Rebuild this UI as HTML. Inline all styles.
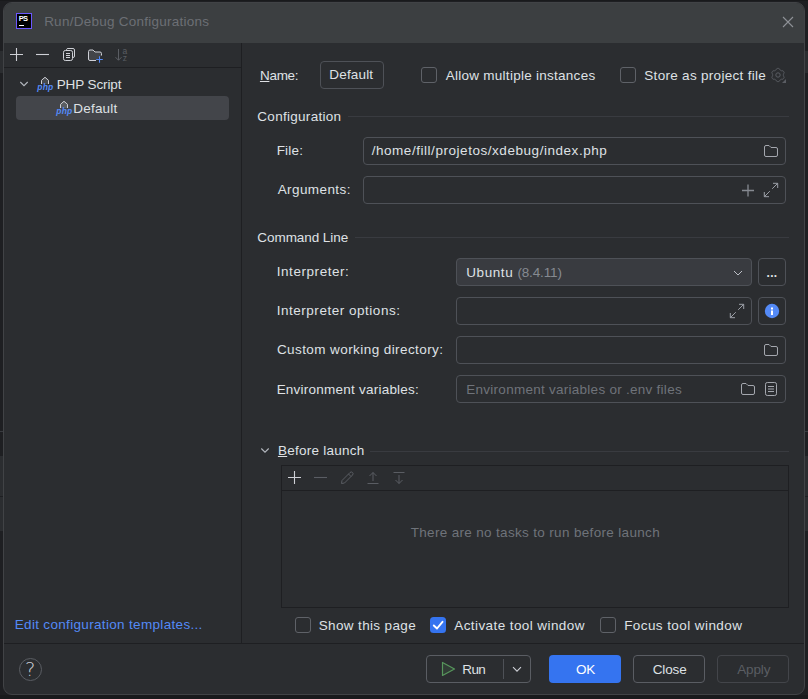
<!DOCTYPE html>
<html lang="en"><head><meta charset="utf-8"><title>Run/Debug Configurations</title>
<style>
html,body{margin:0;padding:0;}
body{width:808px;height:699px;overflow:hidden;background:#1e1f22;position:relative;font-family:"Liberation Sans", sans-serif;font-size:13px;}
.a{position:absolute;box-sizing:border-box;}
.t{position:absolute;white-space:nowrap;height:20px;line-height:20px;}
u{text-decoration:underline;text-underline-offset:1px;text-decoration-thickness:1px;}
.inp{position:absolute;box-sizing:border-box;border:1px solid #4e5157;border-radius:4px;background:#2b2d30;}
.cb{position:absolute;box-sizing:border-box;width:16px;height:16px;border:1px solid #5f6268;border-radius:3px;background:#2b2d30;}
.ln{position:absolute;height:1px;background:#393b40;}
svg{position:absolute;overflow:visible;}
</style></head><body>
<div class="a" style="left:0;top:0;width:808px;height:699px;background:#1e1f22"></div>
<div class="a" style="left:0;top:0;width:808px;height:1px;background:#191a1c"></div>
<div class="a" style="left:0;top:695px;width:808px;height:4px;background:#191a1c"></div>
<div class="a" style="left:0px;top:51px;width:3px;height:22px;background:#2b2d30"></div>
<div class="a" style="left:0px;top:431px;width:3px;height:1px;background:#393b40"></div>
<div class="a" style="left:0px;top:456px;width:3px;height:75px;background:#2b2d30"></div>
<div class="a" style="left:0px;top:496px;width:3px;height:1px;background:#1e1f22"></div>
<div class="a" style="left:805px;top:51px;width:3px;height:22px;background:#2b2d30"></div>
<div class="a" style="left:805px;top:431px;width:3px;height:1px;background:#393b40"></div>
<div class="a" style="left:805px;top:456px;width:3px;height:75px;background:#2b2d30"></div>
<div class="a" style="left:805px;top:496px;width:3px;height:1px;background:#1e1f22"></div>
<div class="a" id="dlg" style="left:3px;top:2px;width:802px;height:693px;border:1px solid #414346;border-radius:9px;background:#2b2d30;overflow:hidden"><div class="a" style="left:0;top:0;width:800px;height:40px;background:#3c3f41"></div></div>
<div class="a" style="left:16px;top:13px;width:16px;height:16px;background:#000;border:1px solid #6b57ff;"></div>
<div class="a" style="left:19px;top:25px;width:5px;height:1px;background:#fff"></div>
<div class="a" style="left:241px;top:43px;width:1px;height:600px;background:#1e1f22"></div>
<div class="a" style="left:4px;top:67px;width:237px;height:1px;background:#1e1f22"></div>
<div class="a" style="left:4px;top:643px;width:800px;height:1px;background:#1e1f22"></div>
<div class="a" style="left:16px;top:96px;width:213px;height:24px;border-radius:4px;background:#43454a"></div>
<div class="inp" style="left:320px;top:61px;width:64px;height:28px"></div>
<div class="inp" style="left:363px;top:137px;width:423px;height:28px"></div>
<div class="inp" style="left:363px;top:176px;width:423px;height:28px"></div>
<div class="inp" style="left:456px;top:258px;width:296px;height:28px;background:#393b40"></div>
<div class="inp" style="left:758px;top:258px;width:28px;height:28px"></div>
<div class="inp" style="left:456px;top:297px;width:296px;height:28px"></div>
<div class="inp" style="left:758px;top:297px;width:28px;height:28px"></div>
<div class="inp" style="left:456px;top:336px;width:330px;height:28px"></div>
<div class="inp" style="left:456px;top:375px;width:330px;height:28px"></div>
<div class="cb" style="left:421px;top:67px"></div>
<div class="cb" style="left:620px;top:67px"></div>
<div class="cb" style="left:295px;top:617px"></div>
<div class="cb" style="left:600px;top:617px"></div>
<div class="a" style="left:430px;top:617px;width:16px;height:16px;border-radius:3.5px;background:#3574f0"></div>
<div class="ln" style="left:348px;top:116px;width:441px"></div>
<div class="ln" style="left:355px;top:237px;width:434px"></div>
<div class="ln" style="left:370px;top:451px;width:419px"></div>
<div class="a" style="left:281px;top:465px;width:508px;height:143px;border:1px solid #1e1f22;"></div>
<div class="a" style="left:282px;top:490px;width:506px;height:1px;background:#1e1f22"></div>
<div class="a" style="left:19px;top:658px;width:23px;height:23px;border:1px solid #5a5d63;border-radius:50%"></div>
<span class="a" id="q" style="left:25.1px;top:658.6px;font-family:'DejaVu Sans Light','DejaVu Sans',sans-serif;font-weight:200;font-size:19.5px;line-height:22px;color:#ced0d6">?</span>
<div class="inp" style="left:426px;top:655px;width:105px;height:28px;border-color:#5a5d63"></div>
<div class="a" style="left:503px;top:659px;width:1px;height:20px;background:#4e5157"></div>
<div class="a" style="left:549px;top:655px;width:72px;height:28px;border-radius:4px;background:#3574f0"></div>
<div class="inp" style="left:633px;top:655px;width:72px;height:28px;border-color:#5a5d63"></div>
<div class="inp" style="left:717px;top:655px;width:72px;height:28px;border-color:#43454a"></div>
<svg style="left:0;top:0" width="808" height="699" viewBox="0 0 808 699"><text x="18.800" y="21.200" font-size="7.500" font-weight="bold" fill="#fff" font-family="Liberation Sans, sans-serif" letter-spacing="-0.700">PS</text>
<path d="M783 17L793 27M793 17L783 27" stroke="#8f9297" fill="none" stroke-width="1.1" />
<path d="M10 54.5H23M16.5 48V61" stroke="#ced0d6" fill="none" stroke-width="1.1" />
<path d="M36 54.5H49" stroke="#ced0d6" fill="none" stroke-width="1.1" />
<path d="M66.5 50V49.5A1.5 1.5 0 0 1 68 48.5H73A1.5 1.5 0 0 1 74.5 50V56A1.5 1.5 0 0 1 73 57.5H72.5" stroke="#ced0d6" fill="none" stroke-width="1" />
<rect x="63.5" y="50.5" width="9" height="10" rx="1.8" stroke="#ced0d6" fill="none"/>
<path d="M66 53.5H70M66 55.5H70M66 57.5H70" stroke="#ced0d6" fill="none" stroke-width="1" />
<path d="M96 60.5H90A1.500 1.500 0 0 1 88.500 59V51.500A1.500 1.500 0 0 1 90 50H93L95 52H100A1.500 1.500 0 0 1 101.500 53.500V55.5" stroke="#ced0d6" fill="#43454a" stroke-width="1" />
<path d="M99.5 56.300V62.800M96.200 59.500H102.800" stroke="#548af7" fill="none" stroke-width="1.1" />
<path d="M118.500 49V60M115.500 57.200L118.500 60.300L121.500 57.200" stroke="#5a5d63" fill="none" stroke-width="1" />
<text x="122.500" y="54" font-size="8.500" fill="#5a5d63" font-family="Liberation Sans, sans-serif">a</text>
<text x="122.800" y="60.700" font-size="8.500" fill="#5a5d63" font-family="Liberation Sans, sans-serif">z</text>
<path d="M20.300 82L24 85.700L27.700 82" stroke="#b4b8bf" fill="none" stroke-width="1.1" />
<path d="M41.5 84V80.3L45 77.3L48.5 80.3V84" stroke="#ced0d6" fill="rgba(206,208,214,0.18)" stroke-width="1" />
<text x="37.3" y="90" font-size="8.500" font-style="italic" font-weight="bold" fill="#548af7" font-family="Liberation Sans, sans-serif" letter-spacing="0.15">php</text>
<path d="M60.5 108V104.3L64 101.3L67.5 104.3V108" stroke="#ced0d6" fill="rgba(206,208,214,0.18)" stroke-width="1" />
<text x="56.3" y="114" font-size="8.500" font-style="italic" font-weight="bold" fill="#548af7" font-family="Liberation Sans, sans-serif" letter-spacing="0.15">php</text>
<path d="M778.00 68.38L778.58 68.41L779.13 68.57L779.55 69.20L779.87 69.86L780.27 70.12L780.69 70.34L781.09 70.59L781.52 70.81L782.24 70.76L783.00 70.80L783.42 71.20L783.73 71.69L784.00 72.20L784.13 72.77L783.80 73.45L783.39 74.05L783.36 74.53L783.38 75.00L783.36 75.47L783.39 75.95L783.80 76.55L784.13 77.23L784.00 77.80L783.73 78.31L783.42 78.80L783.00 79.20L782.24 79.24L781.52 79.19L781.09 79.41L780.69 79.66L780.27 79.88L779.87 80.14L779.55 80.80L779.13 81.43L778.58 81.59L778.00 81.62L777.42 81.59L776.87 81.43L776.45 80.80L776.13 80.14L775.73 79.88L775.31 79.66L774.91 79.41L774.48 79.19L773.76 79.24L773.00 79.20L772.58 78.80L772.27 78.31L772.00 77.80L771.87 77.23L772.20 76.55L772.61 75.95L772.64 75.47L772.62 75.00L772.64 74.53L772.61 74.05L772.20 73.45L771.87 72.77L772.00 72.20L772.27 71.69L772.58 71.20L773.00 70.80L773.76 70.76L774.48 70.81L774.91 70.59L775.31 70.34L775.73 70.12L776.13 69.86L776.45 69.20L776.87 68.57L777.42 68.41Z" stroke="#5a5d63" fill="none" stroke-width="1" stroke-linejoin="round"/>
<circle cx="778" cy="75" r="2.2" stroke="#5a5d63" fill="none"/>
<path d="M786 79V83H782Z" stroke="none" fill="#5a5d63" stroke-width="1" />
<path d="M764.5 147A1.500 1.500 0 0 1 766 145.5H769L771 147.5H776A1.500 1.500 0 0 1 777.5 149V155A1.500 1.500 0 0 1 776 156.5H766A1.500 1.500 0 0 1 764.5 155Z" stroke="#a4a7ae" fill="none" stroke-width="1" />
<path d="M764.5 346A1.500 1.500 0 0 1 766 344.5H769L771 346.5H776A1.500 1.500 0 0 1 777.5 348V354A1.500 1.500 0 0 1 776 355.5H766A1.500 1.500 0 0 1 764.5 354Z" stroke="#a4a7ae" fill="none" stroke-width="1" />
<path d="M741.5 385A1.500 1.500 0 0 1 743 383.5H746L748 385.5H753A1.500 1.500 0 0 1 754.5 387V393A1.500 1.500 0 0 1 753 394.5H743A1.500 1.500 0 0 1 741.5 393Z" stroke="#a4a7ae" fill="none" stroke-width="1" />
<path d="M742 190.500H754M748 184.500V196.500" stroke="#868a91" fill="none" stroke-width="1.3" />
<path d="M773 183.3H777.7V188M777.7 183.3L772.2 188.8M769 196.7H764.3V192M764.3 196.7L769.8 191.2" stroke="#9da0a8" fill="none" stroke-width="1" />
<path d="M739 304.3H743.7V309M743.7 304.3L738.2 309.8M735 317.7H730.3V313M730.3 317.7L735.8 312.2" stroke="#9da0a8" fill="none" stroke-width="1" />
<path d="M734 271L738 275L742 271" stroke="#bcbfc6" fill="none" stroke-width="1" />
<circle cx="772" cy="311" r="7.2" fill="#548af7"/>
<rect x="771" y="307.500" width="2" height="2" fill="#fff"/><rect x="771" y="310.500" width="2" height="4.500" fill="#fff"/>
<rect x="765.500" y="382.500" width="11" height="13" rx="1.800" stroke="#a4a7ae" fill="none"/>
<path d="M768 386.500H774M768 389H774M768 391.500H774" stroke="#a4a7ae" fill="none" stroke-width="1" />
<path d="M261.300 448.500L265 452.200L268.700 448.500" stroke="#b4b8bf" fill="none" stroke-width="1.1" />
<path d="M288 477.500H301M294.500 471V484" stroke="#ced0d6" fill="none" stroke-width="1.1" />
<path d="M314 477.500H327" stroke="#5a5d63" fill="none" stroke-width="1.1" />
<path d="M341.500 483.500L342 480.500L350 472.500A1.600 1.600 0 0 1 352.500 475L344.500 483Z" stroke="#5a5d63" fill="none" stroke-width="1" stroke-linejoin="round"/>
<path d="M348.500 474L351 476.500" stroke="#5a5d63" fill="none" stroke-width="1" />
<path d="M367.500 483.500H378.500M373 481V472.500M369.500 476L373 472.500L376.500 476" stroke="#5a5d63" fill="none" stroke-width="1" />
<path d="M393.500 472.500H404.500M399 475V483.500M395.500 480L399 483.500L402.500 480" stroke="#5a5d63" fill="none" stroke-width="1" />
<path d="M433.800 625.500L437 628.500L442.500 621.800" stroke="#fff" fill="none" stroke-width="1.9" stroke-linecap="round" stroke-linejoin="round"/>
<path d="M442.500 662.500V675.500L454.500 669Z" stroke="#57965c" fill="rgba(87,150,92,0.15)" stroke-width="1.2" stroke-linejoin="round"/>
<path d="M513 667.200L517 671.200L521 667.200" stroke="#ced0d6" fill="none" stroke-width="1.1" /></svg>
<span class="t" id="t_title" style="left:44.14px;top:12px;color:#6c6f75;font-size:13.5px;letter-spacing:0.249px;">Run/Debug Configurations</span>
<span class="t" id="t_php" style="left:56.73px;top:75px;color:#dfe1e5;font-size:13.5px;letter-spacing:-0.115px;">PHP Script</span>
<span class="t" id="t_def" style="left:73.27px;top:99px;color:#dfe1e5;font-size:13.5px;letter-spacing:0.207px;">Default</span>
<span class="t" id="t_edit" style="left:14.73px;top:615px;color:#548af7;font-size:13.5px;letter-spacing:0.327px;">Edit configuration templates...</span>
<span class="t" id="t_name" style="left:259.93px;top:66px;color:#dfe1e5;font-size:13.5px;letter-spacing:-0.277px;"><u>N</u>ame:</span>
<span class="t" id="t_namev" style="left:329.34px;top:65px;color:#dfe1e5;font-size:13.5px;letter-spacing:0.158px;">Default</span>
<span class="t" id="t_allow" style="left:445.7px;top:66px;color:#dfe1e5;font-size:13.5px;letter-spacing:0.268px;">Allow multiple instances</span>
<span class="t" id="t_store" style="left:644.31px;top:66px;color:#dfe1e5;font-size:13.5px;letter-spacing:0.297px;">Store as project file</span>
<span class="t" id="t_conf" style="left:257.33px;top:107px;color:#dfe1e5;font-size:13.5px;letter-spacing:0.287px;">Configuration</span>
<span class="t" id="t_file" style="left:276.64px;top:141px;color:#dfe1e5;font-size:13.5px;letter-spacing:0.245px;">File:</span>
<span class="t" id="t_filev" style="left:371.68px;top:141px;color:#dfe1e5;font-size:13.5px;letter-spacing:0.543px;">/home/fill/projetos/xdebug/index.php</span>
<span class="t" id="t_args" style="left:277.7px;top:180px;color:#dfe1e5;font-size:13.5px;letter-spacing:0.407px;">Arguments:</span>
<span class="t" id="t_cmd" style="left:257.33px;top:228px;color:#dfe1e5;font-size:13.5px;letter-spacing:-0.065px;">Command Line</span>
<span class="t" id="t_interp" style="left:276.73px;top:262px;color:#dfe1e5;font-size:13.5px;letter-spacing:0.557px;">Interpreter:</span>
<span class="t" id="t_ubuntu" style="left:466.3px;top:263px;color:#dfe1e5;font-size:13.5px;letter-spacing:0.571px;">Ubuntu</span>
<span class="t" id="t_ver" style="left:517.38px;top:263px;color:#868a91;font-size:13.5px;letter-spacing:-0.132px;">(8.4.11)</span>
<span class="t" id="t_iopt" style="left:276.73px;top:301px;color:#dfe1e5;font-size:13.5px;letter-spacing:0.521px;">Interpreter options:</span>
<span class="t" id="t_cwd" style="left:276.92px;top:340px;color:#dfe1e5;font-size:13.5px;letter-spacing:0.420px;">Custom working directory:</span>
<span class="t" id="t_env" style="left:276.64px;top:380px;color:#dfe1e5;font-size:13.5px;letter-spacing:0.233px;">Environment variables:</span>
<span class="t" id="t_envph" style="left:466.27px;top:380px;color:#6f737a;font-size:13.5px;letter-spacing:0.266px;">Environment variables or .env files</span>
<span class="t" id="t_before" style="left:277.93px;top:441px;color:#dfe1e5;font-size:13.5px;letter-spacing:0.257px;"><u>B</u>efore launch</span>
<span class="t" id="t_notasks" style="left:410.65px;top:523px;color:#6f737a;font-size:13.5px;letter-spacing:0.333px;">There are no tasks to run before launch</span>
<span class="t" id="t_show" style="left:318.75px;top:616px;color:#dfe1e5;font-size:13.5px;letter-spacing:0.353px;">Show this page</span>
<span class="t" id="t_act" style="left:454.21px;top:616px;color:#dfe1e5;font-size:13.5px;letter-spacing:0.419px;">Activate tool window</span>
<span class="t" id="t_focus" style="left:624.14px;top:616px;color:#dfe1e5;font-size:13.5px;letter-spacing:0.422px;">Focus tool window</span>
<span class="t" id="t_run" style="left:462.27px;top:660px;color:#dfe1e5;font-size:13.5px;letter-spacing:-0.594px;">Run</span>
<span class="t" id="t_ok" style="left:575.94px;top:660px;color:#ffffff;font-size:13.5px;letter-spacing:-0.214px;">OK</span>
<span class="t" id="t_close" style="left:652.63px;top:660px;color:#dfe1e5;font-size:13.5px;letter-spacing:-0.100px;">Close</span>
<span class="t" id="t_apply" style="left:737.24px;top:660px;color:#5a5d63;font-size:13.5px;letter-spacing:-0.141px;">Apply</span>
<span class="t" id="t_dots" style="left:766.56px;top:263px;color:#dfe1e5;font-size:12px;letter-spacing:0.312px;font-weight:bold;">...</span>
</body></html>
